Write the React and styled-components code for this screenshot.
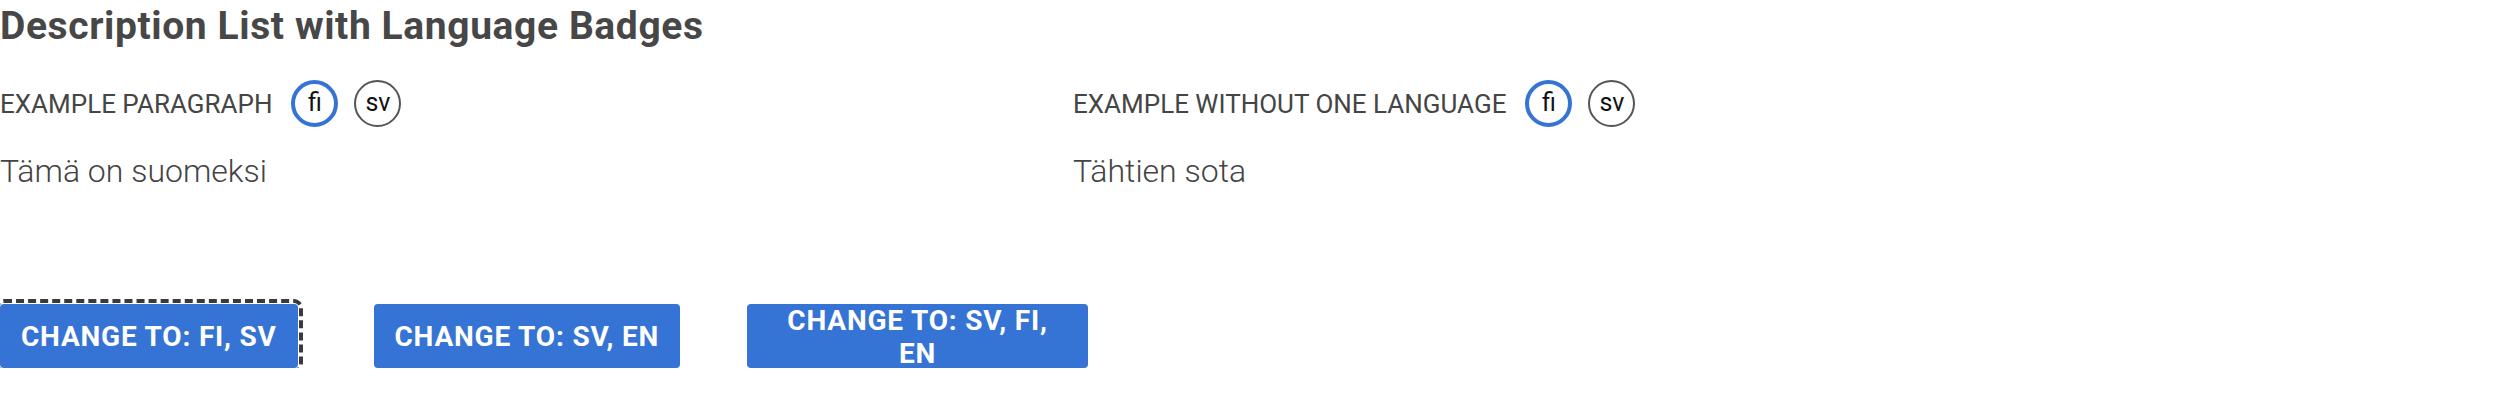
import React from "react";
import styled, { createGlobalStyle } from "styled-components";

const GlobalStyle = createGlobalStyle`
  body {
    margin: 0;
    background: #fff;
    font-family: Roboto, "Liberation Sans", sans-serif;
  }
`;

const items = [
  { label: "Example paragraph", text: "Tämä on suomeksi" },
  { label: "Example without one language", text: "Tähtien sota" },
];

const buttons = ["Change to: fi, sv", "Change to: sv, en", "Change to: sv, fi, en"];

const App = () => {
  return (
    <Page>
      <GlobalStyle />
      <Title>Description List with Language Badges</Title>
      <List>
        {items.map((item) => (
          <Item key={item.label}>
            <Term>
              <Label>{item.label}</Label>
              <Badge $active>fi</Badge>
              <Badge>sv</Badge>
            </Term>
            <Desc>{item.text}</Desc>
          </Item>
        ))}
      </List>
      <Buttons>
        {buttons.map((b, i) => (
          <Cell key={b}>
            <Button $focused={i === 0}>{b}</Button>
          </Cell>
        ))}
      </Buttons>
    </Page>
  );
};

const Page = styled.div`
  color: #444;
`;

const Title = styled.h2`
  margin: 0;
  font-size: 39px;
  line-height: 52px;
  font-weight: 700;
  color: #474747;
  letter-spacing: 0.6px;
`;

const List = styled.dl`
  display: grid;
  grid-template-columns: 1073px 1fr;
  margin: 28px 0 0;
`;

const Item = styled.div``;

const Term = styled.dt`
  display: flex;
  align-items: center;
  height: 47px;
`;

const Label = styled.span`
  font-size: 26px;
  text-transform: uppercase;
  color: #454545;
  margin-right: 19px;
`;

const Badge = styled.span`
  box-sizing: border-box;
  width: 47px;
  height: 47px;
  border-radius: 50%;
  border: ${(p) => (p.$active ? "4px solid #3574d4" : "2px solid #555")};
  display: flex;
  align-items: center;
  justify-content: center;
  font-size: 25px;
  color: #111;
  margin-right: 16px;
  padding-bottom: 2px;
`;

const Desc = styled.dd`
  margin: 22px 0 0;
  font-size: 32px;
  line-height: 44px;
  font-weight: 300;
  color: #444;
`;

const Buttons = styled.div`
  display: flex;
  margin-top: 111px;
`;

const Cell = styled.div`
  width: 373.5px;
  flex: none;
`;

const Button = styled.button`
  box-sizing: border-box;
  max-width: 341px;
  height: 64px;
  padding: 0 21px;
  border: none;
  border-radius: 4px;
  background: #3574d4;
  color: #fff;
  font-family: Roboto, "Liberation Sans", sans-serif;
  font-size: 28px;
  font-weight: 700;
  line-height: 33px;
  letter-spacing: 0.8px;
  text-transform: uppercase;
  text-align: center;
  cursor: pointer;
  outline: ${(p) => (p.$focused ? "4px dashed #3a3a3a" : "none")};
  outline-offset: 1px;
`;

export default App;
